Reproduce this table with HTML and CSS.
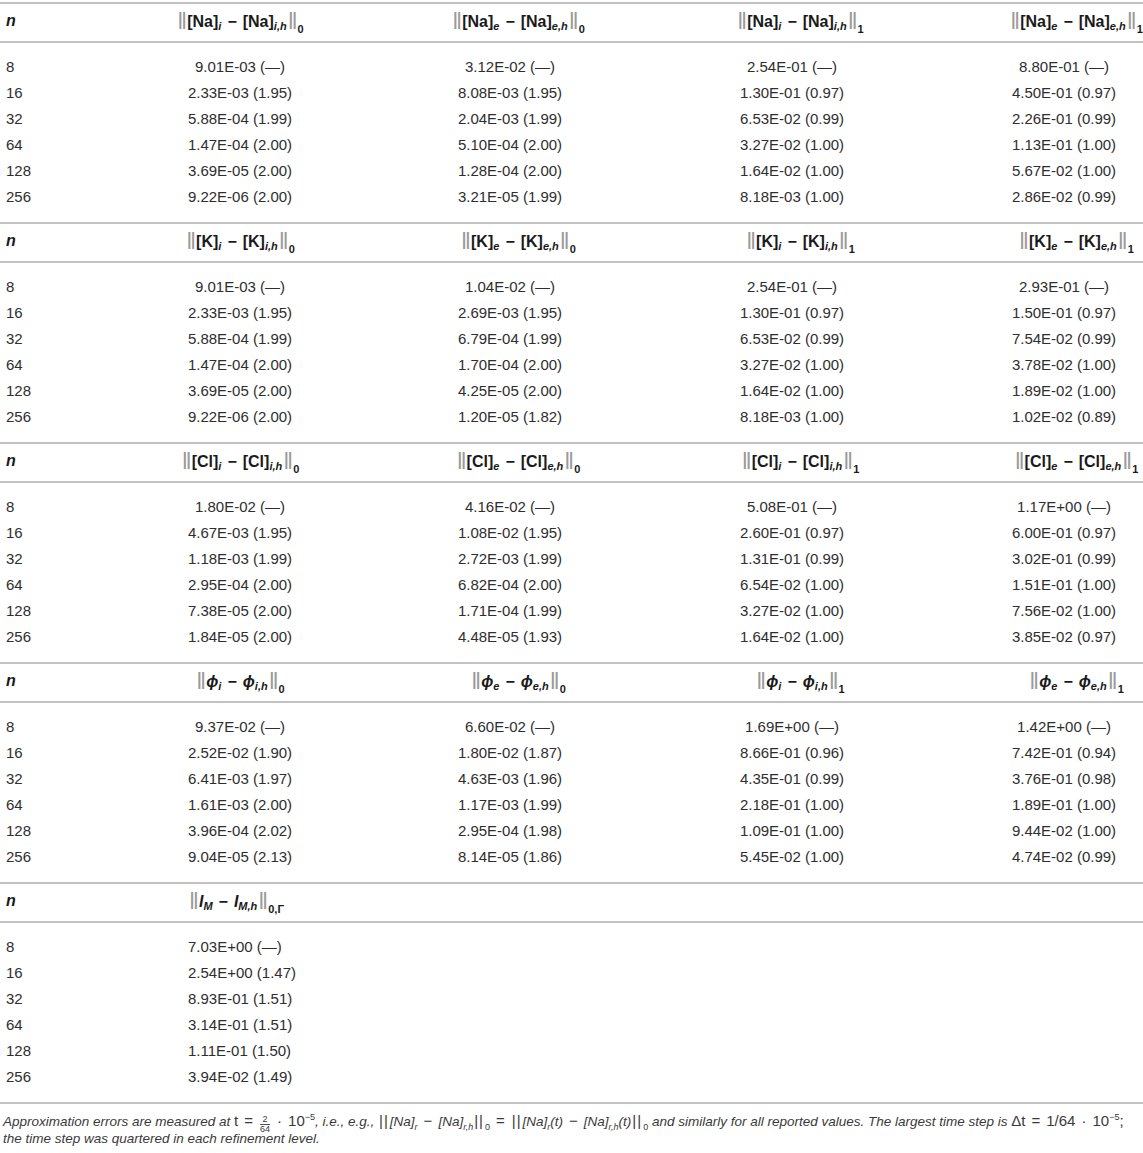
FILE: index.html
```html
<!DOCTYPE html>
<html lang="en">
<head>
  <meta charset="UTF-8">
  <title>Approximation errors</title>
  <link rel="stylesheet" href="styles.css">
</head>
<body>
  <div class="err-table">

    <!-- sodium -->
    <section class="block">
      <div class="row head">
        <span class="n">n</span>
        <span><i class="nb">‖</i>[Na]<sub>i</sub><b class="op">−</b>[Na]<sub>i,h</sub><i class="nb">‖</i><sub class="ix">0</sub></span>
        <span><i class="nb">‖</i>[Na]<sub>e</sub><b class="op">−</b>[Na]<sub>e,h</sub><i class="nb">‖</i><sub class="ix">0</sub></span>
        <span><i class="nb">‖</i>[Na]<sub>i</sub><b class="op">−</b>[Na]<sub>i,h</sub><i class="nb">‖</i><sub class="ix">1</sub></span>
        <span><i class="nb">‖</i>[Na]<sub>e</sub><b class="op">−</b>[Na]<sub>e,h</sub><i class="nb">‖</i><sub class="ix">1</sub></span>
      </div>
      <div class="rows">
        <div class="row"><span>8</span><span>9.01E-03 (—)</span><span>3.12E-02 (—)</span><span>2.54E-01 (—)</span><span>8.80E-01 (—)</span></div>
        <div class="row"><span>16</span><span>2.33E-03 (1.95)</span><span>8.08E-03 (1.95)</span><span>1.30E-01 (0.97)</span><span>4.50E-01 (0.97)</span></div>
        <div class="row"><span>32</span><span>5.88E-04 (1.99)</span><span>2.04E-03 (1.99)</span><span>6.53E-02 (0.99)</span><span>2.26E-01 (0.99)</span></div>
        <div class="row"><span>64</span><span>1.47E-04 (2.00)</span><span>5.10E-04 (2.00)</span><span>3.27E-02 (1.00)</span><span>1.13E-01 (1.00)</span></div>
        <div class="row"><span>128</span><span>3.69E-05 (2.00)</span><span>1.28E-04 (2.00)</span><span>1.64E-02 (1.00)</span><span>5.67E-02 (1.00)</span></div>
        <div class="row"><span>256</span><span>9.22E-06 (2.00)</span><span>3.21E-05 (1.99)</span><span>8.18E-03 (1.00)</span><span>2.86E-02 (0.99)</span></div>
      </div>
    </section>

    <!-- potassium -->
    <section class="block">
      <div class="row head">
        <span class="n">n</span>
        <span><i class="nb">‖</i>[K]<sub>i</sub><b class="op">−</b>[K]<sub>i,h</sub><i class="nb">‖</i><sub class="ix">0</sub></span>
        <span><i class="nb">‖</i>[K]<sub>e</sub><b class="op">−</b>[K]<sub>e,h</sub><i class="nb">‖</i><sub class="ix">0</sub></span>
        <span><i class="nb">‖</i>[K]<sub>i</sub><b class="op">−</b>[K]<sub>i,h</sub><i class="nb">‖</i><sub class="ix">1</sub></span>
        <span><i class="nb">‖</i>[K]<sub>e</sub><b class="op">−</b>[K]<sub>e,h</sub><i class="nb">‖</i><sub class="ix">1</sub></span>
      </div>
      <div class="rows">
        <div class="row"><span>8</span><span>9.01E-03 (—)</span><span>1.04E-02 (—)</span><span>2.54E-01 (—)</span><span>2.93E-01 (—)</span></div>
        <div class="row"><span>16</span><span>2.33E-03 (1.95)</span><span>2.69E-03 (1.95)</span><span>1.30E-01 (0.97)</span><span>1.50E-01 (0.97)</span></div>
        <div class="row"><span>32</span><span>5.88E-04 (1.99)</span><span>6.79E-04 (1.99)</span><span>6.53E-02 (0.99)</span><span>7.54E-02 (0.99)</span></div>
        <div class="row"><span>64</span><span>1.47E-04 (2.00)</span><span>1.70E-04 (2.00)</span><span>3.27E-02 (1.00)</span><span>3.78E-02 (1.00)</span></div>
        <div class="row"><span>128</span><span>3.69E-05 (2.00)</span><span>4.25E-05 (2.00)</span><span>1.64E-02 (1.00)</span><span>1.89E-02 (1.00)</span></div>
        <div class="row"><span>256</span><span>9.22E-06 (2.00)</span><span>1.20E-05 (1.82)</span><span>8.18E-03 (1.00)</span><span>1.02E-02 (0.89)</span></div>
      </div>
    </section>

    <!-- chloride -->
    <section class="block">
      <div class="row head">
        <span class="n">n</span>
        <span><i class="nb">‖</i>[Cl]<sub>i</sub><b class="op">−</b>[Cl]<sub>i,h</sub><i class="nb">‖</i><sub class="ix">0</sub></span>
        <span><i class="nb">‖</i>[Cl]<sub>e</sub><b class="op">−</b>[Cl]<sub>e,h</sub><i class="nb">‖</i><sub class="ix">0</sub></span>
        <span><i class="nb">‖</i>[Cl]<sub>i</sub><b class="op">−</b>[Cl]<sub>i,h</sub><i class="nb">‖</i><sub class="ix">1</sub></span>
        <span><i class="nb">‖</i>[Cl]<sub>e</sub><b class="op">−</b>[Cl]<sub>e,h</sub><i class="nb">‖</i><sub class="ix">1</sub></span>
      </div>
      <div class="rows">
        <div class="row"><span>8</span><span>1.80E-02 (—)</span><span>4.16E-02 (—)</span><span>5.08E-01 (—)</span><span>1.17E+00 (—)</span></div>
        <div class="row"><span>16</span><span>4.67E-03 (1.95)</span><span>1.08E-02 (1.95)</span><span>2.60E-01 (0.97)</span><span>6.00E-01 (0.97)</span></div>
        <div class="row"><span>32</span><span>1.18E-03 (1.99)</span><span>2.72E-03 (1.99)</span><span>1.31E-01 (0.99)</span><span>3.02E-01 (0.99)</span></div>
        <div class="row"><span>64</span><span>2.95E-04 (2.00)</span><span>6.82E-04 (2.00)</span><span>6.54E-02 (1.00)</span><span>1.51E-01 (1.00)</span></div>
        <div class="row"><span>128</span><span>7.38E-05 (2.00)</span><span>1.71E-04 (1.99)</span><span>3.27E-02 (1.00)</span><span>7.56E-02 (1.00)</span></div>
        <div class="row"><span>256</span><span>1.84E-05 (2.00)</span><span>4.48E-05 (1.93)</span><span>1.64E-02 (1.00)</span><span>3.85E-02 (0.97)</span></div>
      </div>
    </section>

    <!-- potential -->
    <section class="block">
      <div class="row head">
        <span class="n">n</span>
        <span><i class="nb">‖</i><i>ϕ</i><sub>i</sub><b class="op">−</b><i>ϕ</i><sub>i,h</sub><i class="nb">‖</i><sub class="ix">0</sub></span>
        <span><i class="nb">‖</i><i>ϕ</i><sub>e</sub><b class="op">−</b><i>ϕ</i><sub>e,h</sub><i class="nb">‖</i><sub class="ix">0</sub></span>
        <span><i class="nb">‖</i><i>ϕ</i><sub>i</sub><b class="op">−</b><i>ϕ</i><sub>i,h</sub><i class="nb">‖</i><sub class="ix">1</sub></span>
        <span><i class="nb">‖</i><i>ϕ</i><sub>e</sub><b class="op">−</b><i>ϕ</i><sub>e,h</sub><i class="nb">‖</i><sub class="ix">1</sub></span>
      </div>
      <div class="rows">
        <div class="row"><span>8</span><span>9.37E-02 (—)</span><span>6.60E-02 (—)</span><span>1.69E+00 (—)</span><span>1.42E+00 (—)</span></div>
        <div class="row"><span>16</span><span>2.52E-02 (1.90)</span><span>1.80E-02 (1.87)</span><span>8.66E-01 (0.96)</span><span>7.42E-01 (0.94)</span></div>
        <div class="row"><span>32</span><span>6.41E-03 (1.97)</span><span>4.63E-03 (1.96)</span><span>4.35E-01 (0.99)</span><span>3.76E-01 (0.98)</span></div>
        <div class="row"><span>64</span><span>1.61E-03 (2.00)</span><span>1.17E-03 (1.99)</span><span>2.18E-01 (1.00)</span><span>1.89E-01 (1.00)</span></div>
        <div class="row"><span>128</span><span>3.96E-04 (2.02)</span><span>2.95E-04 (1.98)</span><span>1.09E-01 (1.00)</span><span>9.44E-02 (1.00)</span></div>
        <div class="row"><span>256</span><span>9.04E-05 (2.13)</span><span>8.14E-05 (1.86)</span><span>5.45E-02 (1.00)</span><span>4.74E-02 (0.99)</span></div>
      </div>
    </section>

    <!-- membrane current -->
    <section class="block last">
      <div class="row head">
        <span class="n">n</span>
        <span><i class="nb">‖</i><i>I</i><sub>M</sub><b class="op">−</b><i>I</i><sub>M,h</sub><i class="nb">‖</i><sub class="ix">0,Γ</sub></span>
      </div>
      <div class="rows">
        <div class="row"><span>8</span><span>7.03E+00 (—)</span></div>
        <div class="row"><span>16</span><span>2.54E+00 (1.47)</span></div>
        <div class="row"><span>32</span><span>8.93E-01 (1.51)</span></div>
        <div class="row"><span>64</span><span>3.14E-01 (1.51)</span></div>
        <div class="row"><span>128</span><span>1.11E-01 (1.50)</span></div>
        <div class="row"><span>256</span><span>3.94E-02 (1.49)</span></div>
      </div>
    </section>

    <p class="note">
      Approximation errors are measured at <span class="m">t<b class="eq">=</b><span class="frac"><span>2</span><span>64</span></span><b class="eq">·</b>10<sup>−5</sup></span>, i.e., e.g., <span class="m bars">||</span>[Na]<sub>r</sub><b class="eq">−</b>[Na]<sub>r,h</sub><span class="m"><span class="bars">||</span><sub>0</sub><b class="eq">=</b><span class="bars">||</span></span>[Na]<sub>r</sub>(t)<b class="eq">−</b>[Na]<sub>r,h</sub>(t)<span class="m"><span class="bars">||</span><sub>0</sub></span> and similarly for all reported values. The largest time step is <span class="m">Δt<b class="eq">=</b>1/64<b class="eq">·</b>10<sup>−5</sup>;</span><br>the time step was quartered in each refinement level.
    </p>
  </div>
</body>
</html>
```

FILE: styles.css
```css
body {
  margin: 0;
  font-family: "Liberation Sans", Arial, sans-serif;
  color: #2e2e2e;
  background: #fff;
}

.err-table {
  padding-top: 2px;
  overflow: hidden;
}

.block {
  border-top: 2px solid #c2c2c2;
}

.block.last {
  border-bottom: 2px solid #c2c2c2;
}

.row {
  display: grid;
  grid-template-columns: 105px 270px 270px 294px 1fr;
  font-size: 15px;
  line-height: 26px;
}

.row > span {
  white-space: nowrap;
}

.row > span:nth-child(n+2) {
  text-align: center;
}

.row > span:nth-child(1) {
  padding-left: 6px;
}

.row > span:nth-child(5) {
  padding-left: 46px;
}

.head {
  box-sizing: border-box;
  height: 39px;
  padding-bottom: 3px;
  align-items: center;
  border-bottom: 2px solid #c2c2c2;
  font-size: 16px;
  font-weight: bold;
  color: #1a1a1a;
}

.head > span:nth-child(3),
.head > span:nth-child(4) {
  padding-left: 16px;
}

.head > span:nth-child(5) {
  padding-left: 70px;
}

.head .n {
  font-style: italic;
}

.head sub {
  font-size: 11px;
  font-style: italic;
  vertical-align: -3px;
  line-height: 0;
}

.head sub.ix {
  font-style: normal;
  vertical-align: -6px;
}

.op {
  margin: 0 6px;
}

.nb {
  font-style: normal;
  font-weight: normal;
  font-size: 24px;
  color: #9a9a9a;
  vertical-align: -2px;
  letter-spacing: -1px;
  margin: 0 1px;
}

.rows {
  padding: 11px 0 12px;
}

.last .row > span:nth-child(2) {
  text-align: left;
  padding-left: 83px;
}

.note {
  margin: 8px 0 0 3px;
  font-size: 13.5px;
  line-height: 17px;
  font-style: italic;
  color: #3a3a3a;
}

.note .m {
  font-style: normal;
  font-size: 15px;
}

.bars {
  letter-spacing: 1px;
  margin: 0 1px;
}

.eq {
  font-weight: normal;
  font-style: normal;
  font-size: 15px;
  margin: 0 6px;
}

.note sub,
.note sup {
  font-size: 9px;
  line-height: 0;
}

.frac {
  display: inline-flex;
  flex-direction: column;
  vertical-align: 4px;
  margin: -9px 1px;
  font-size: 9px;
  line-height: 9px;
  text-align: center;
}

.frac span:first-child {
  border-bottom: 1px solid #555;
}
```
